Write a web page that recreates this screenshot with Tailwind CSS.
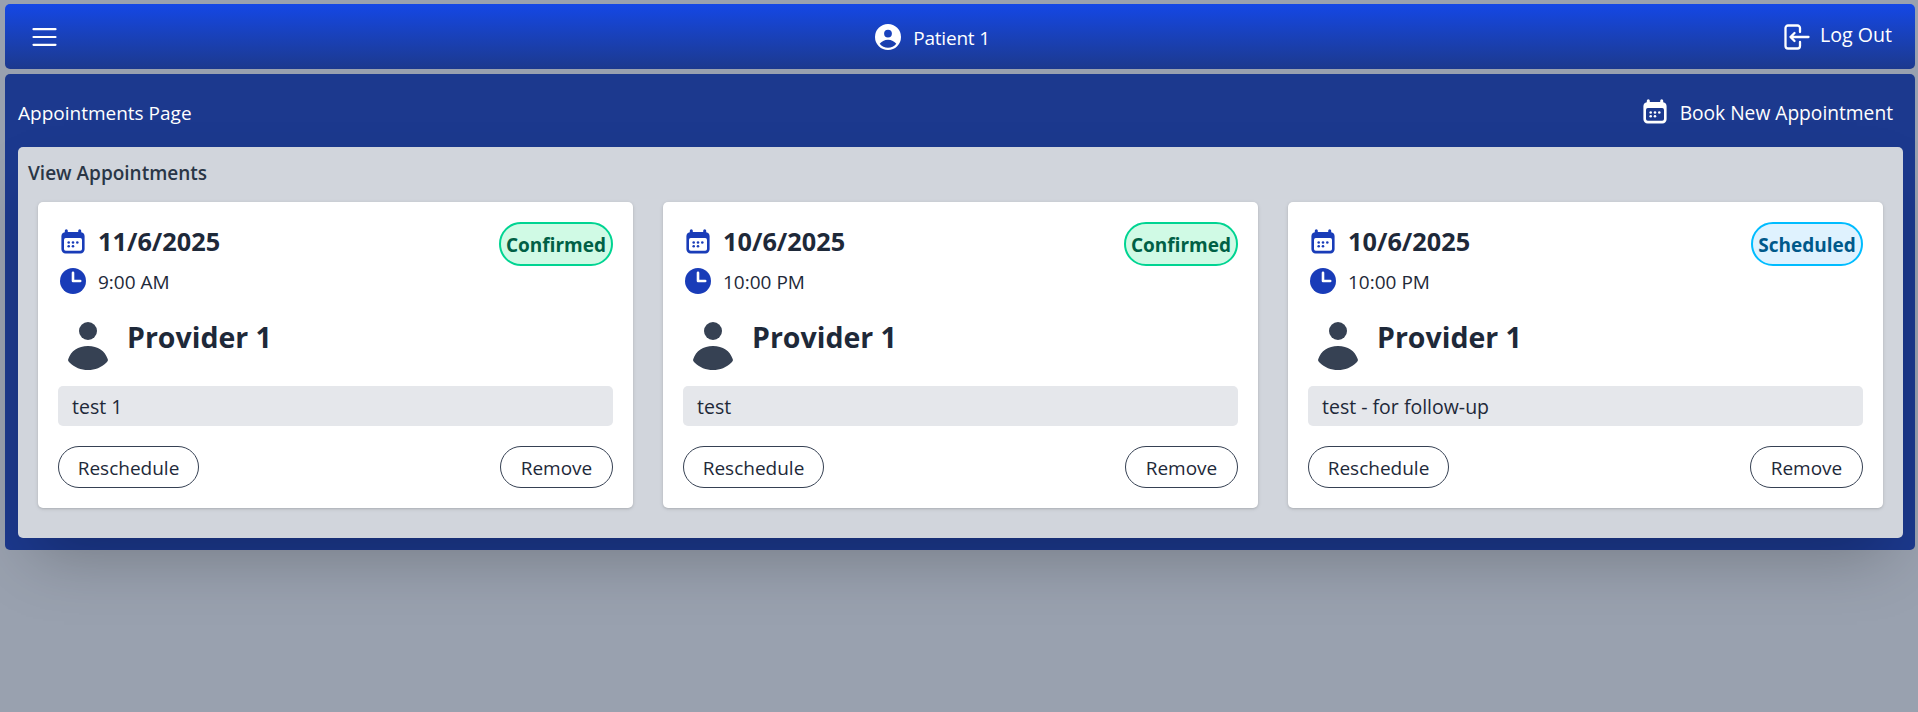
<!DOCTYPE html>
<html lang="en">
<head>
<meta charset="utf-8">
<title>Appointments</title>
<script src="https://cdn.jsdelivr.net/npm/@tailwindcss/browser@4"></script>
</head>
<body class="min-h-screen bg-[#99a1af] font-['Segoe_UI','Open_Sans',sans-serif] text-[20px] leading-[30px] text-[#1e2939] flex flex-col gap-[5px] pt-1 pl-[5px] pr-[3px]">
<svg class="hidden">
  <symbol id="calendar" viewBox="0 0 24 25">
    <path fill="currentColor" fill-rule="evenodd" d="M5.300.3a1.500 1.500 0 0 1 1.500 1.500V2.900h10.400V1.800a1.500 1.500 0 0 1 3 0V3.200A4.200 4.200 0 0 1 23.600 7.200v13.100a4.200 4.200 0 0 1-4.200 4.200H4.600A4.200 4.200 0 0 1 .4 20.300V7.200a4.200 4.200 0 0 1 3.400-4V1.800A1.500 1.500 0 0 1 5.300.3zM4.800 9.100a1.800 1.800 0 0 0-1.800 1.800v9a1.800 1.800 0 0 0 1.800 1.800h14.400a1.800 1.800 0 0 0 1.800-1.800v-9a1.800 1.800 0 0 0-1.800-1.800z"/>
    <g fill="currentColor"><circle cx="7.700" cy="13.500" r="1.300"/><circle cx="12" cy="13.500" r="1.300"/><circle cx="16.300" cy="13.500" r="1.300"/><circle cx="7.700" cy="17.300" r="1.300"/><circle cx="12" cy="17.300" r="1.300"/></g>
  </symbol>
  <symbol id="clock" viewBox="0 0 26 26">
    <circle cx="13" cy="13" r="13" fill="currentColor"/>
    <path d="M13 4.800V13h7.200" fill="none" stroke="#fff" stroke-width="2.600" stroke-linecap="round" stroke-linejoin="round"/>
  </symbol>
  <symbol id="person" viewBox="0 0 40 48">
    <circle cx="20" cy="9" r="9" fill="currentColor"/>
    <path fill="currentColor" d="M20 24c10 0 17 5 19.700 13 .5 1.600 0 2.500-1.200 3.500C33.500 45.500 27 48 20 48S6.500 45.500 1.500 40.500C.3 39.500-.2 38.600.3 37 3 29 10 24 20 24z"/>
  </symbol>
</svg>

<header class="h-[65px] shrink-0 rounded-[5px] bg-linear-to-b from-[#1447e6] to-[#1c398e] text-white flex items-center justify-between pl-[27px] pr-[23px]">
  <div class="w-[241px]">
    <svg class="w-[25px] h-[20px]" viewBox="0 0 25 20" stroke="#fff" stroke-width="2.200" stroke-linecap="round"><path d="M1.500 2.200h22M1.500 10h22M1.500 17.800h22"/></svg>
  </div>
  <div class="flex items-center">
    <svg class="w-[26px] h-[26px]" viewBox="0 0 26 26"><path fill="#fff" fill-rule="evenodd" d="M13 0a13 13 0 1 1 0 26 13 13 0 0 1 0-26zm0 5.700a3.900 3.900 0 1 0 0 7.800 3.900 3.900 0 0 0 0-7.800zm0 10.100c-3.500 0-6.500 1.700-8.300 4 2 2.500 5 4 8.300 4s6.300-1.500 8.300-4c-1.800-2.300-4.800-4-8.300-4z"/></svg>
    <span class="ml-3 pt-[2px] text-[19px] tracking-[-0.2px]">Patient 1</span>
  </div>
  <div class="w-[300px] flex items-center justify-end">
    <svg class="w-[26px] h-[26px]" viewBox="0 0 26 26" fill="none" stroke="#fff" stroke-width="2.300" stroke-linecap="round" stroke-linejoin="round"><path d="M16 8V4a2.500 2.500 0 0 0-2.500-2.500H4A2.500 2.500 0 0 0 1.500 4v18A2.500 2.500 0 0 0 4 24.500h9.500A2.500 2.500 0 0 0 16 22v-4M24.500 13H6.500M10.500 9l-4 4 4 4"/></svg>
    <span class="ml-[10px] pb-[3px] text-[19.600px]">Log Out</span>
  </div>
</header>

<main class="h-[476px] shrink-0 rounded-[5px] bg-[#1c398e] px-[13px] pb-3 flex flex-col">
  <div class="h-[73px] pt-[5px] flex items-center justify-between text-white">
    <h1 class="text-[19px]">Appointments Page</h1>
    <div class="flex items-center pr-[9px]">
      <svg class="w-[24px] h-[25px] mb-1"><use href="#calendar"/></svg>
      <span class="ml-[13px] text-[19.200px]">Book New Appointment</span>
    </div>
  </div>
  <section class="flex-1 -mr-px rounded-[5px] bg-[#d1d5dc] shadow-[0_31px_62px_-15px_rgba(0,0,0,0.25)]">
    <h2 class="h-[55px] pl-[10px] pt-[11px] text-[19px] font-semibold text-[#2a3646]">View Appointments</h2>
    <div id="cards" class="grid grid-cols-3 gap-[30px] px-5"></div>
  </section>
</main>

<template id="card">
  <article class="h-[306px] rounded-[5px] bg-white p-5 shadow-[0_1px_4px_rgba(0,0,0,0.1),0_1px_2px_rgba(0,0,0,0.1)] flex flex-col">
    <div class="flex justify-between items-start h-[80px]">
      <div>
        <div class="flex items-center h-[38px]">
          <svg class="ml-[3px] w-[24px] h-[25px] text-[#193cb8]"><use href="#calendar"/></svg>
          <span data-f="date" class="ml-[13px] pb-px text-[25.300px] font-bold"></span>
        </div>
        <div class="flex items-center h-[42px]">
          <svg class="ml-[2px] w-[26px] h-[26px] text-[#193cb8]"><use href="#clock"/></svg>
          <span data-f="time" class="ml-3 pt-px text-[19px]"></span>
        </div>
      </div>
      <span data-f="status" class="h-[44px] pt-[2px] rounded-full border-2 flex items-center justify-center text-[19px] font-bold"></span>
    </div>
    <div class="flex h-[84px] pl-[10px]">
      <svg class="mt-5 w-[40px] h-[48px] text-[#364153]"><use href="#person"/></svg>
      <span class="ml-[19px] mt-5 text-[28.500px] font-bold">Provider 1</span>
    </div>
    <div data-f="note" class="h-[40px] rounded-[5px] bg-[#e5e7eb] px-[14px] pt-[6px] text-[19.500px]"></div>
    <div class="mt-5 flex justify-between text-[19px]">
      <button class="w-[141px] h-[42px] pt-px rounded-full border border-[#364153]">Reschedule</button>
      <button class="w-[113px] h-[42px] pt-px rounded-full border border-[#364153]">Remove</button>
    </div>
  </article>
</template>
<script>
const confirmed = 'w-[114px] border-[#00d492] bg-[#d0fae5] text-[#006045]';
const scheduled = 'w-[112px] border-[#00bcff] bg-[#dff2fe] text-[#00598a]';
[
  {date:'11/6/2025', time:'9:00 AM', status:'Confirmed', note:'test 1', cls:confirmed},
  {date:'10/6/2025', time:'10:00 PM', status:'Confirmed', note:'test', cls:confirmed},
  {date:'10/6/2025', time:'10:00 PM', status:'Scheduled', note:'test - for follow-up', cls:scheduled}
].forEach(a => {
  const n = document.getElementById('card').content.cloneNode(true);
  n.querySelectorAll('[data-f]').forEach(e => e.textContent = a[e.dataset.f]);
  n.querySelector('[data-f=status]').className += ' ' + a.cls;
  document.getElementById('cards').append(n);
});
</script>
</body>
</html>
